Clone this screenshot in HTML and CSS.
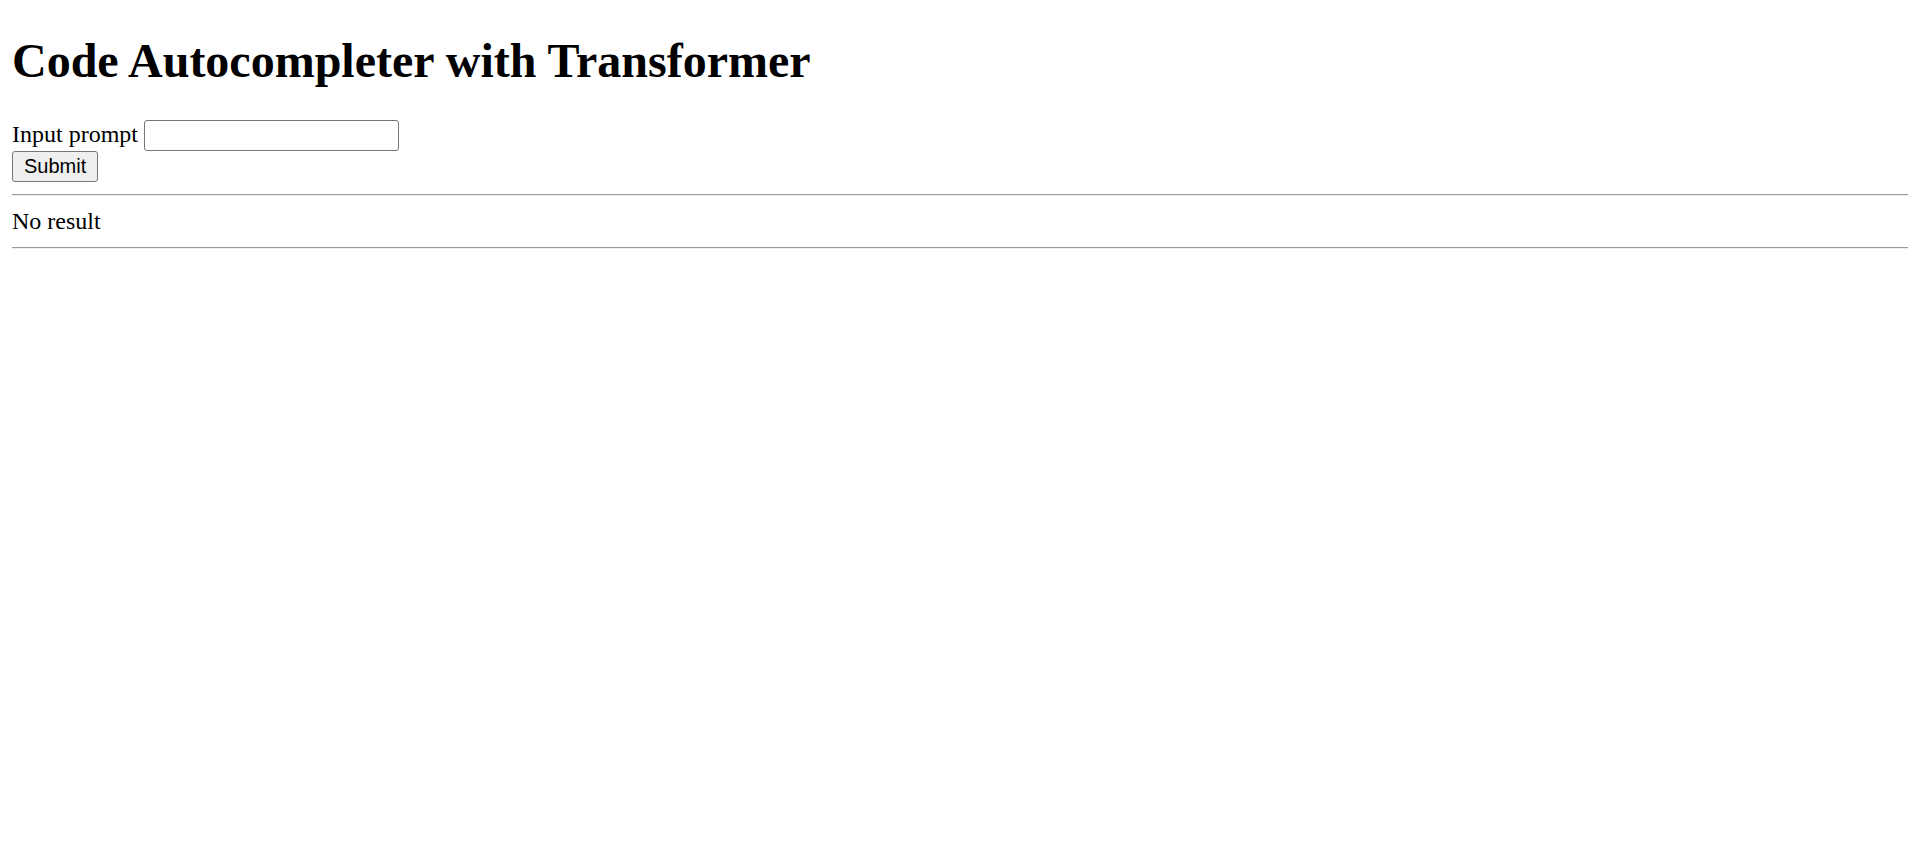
FILE: index.html
```html
<!DOCTYPE html>
<html>
<head>
<meta charset="utf-8">
<title>Code Autocompleter with Transformer</title>
<link rel="stylesheet" href="styles.css">
</head>
<body class="page">
<h1 class="title">Code Autocompleter with Transformer</h1>
<form class="prompt-form">
<label class="prompt-label" for="prompt">Input prompt</label> <input class="prompt-input" id="prompt" type="text"><br>
<button class="submit-btn" type="button">Submit</button>
</form>
<hr class="rule">
<div class="result">No result</div>
<hr class="rule">
</body>
</html>
```
FILE: styles.css
```css
html { background: #fff; }
.page {
  margin: 12px;
  font-family: "Liberation Serif", "Times New Roman", serif;
  font-size: 24px;
  color: #000;
}
.title {
  font-size: 48px;
  font-weight: bold;
  margin: 21px 0 32px;
}
.prompt-form { margin: 0; }
.prompt-input {
  box-sizing: border-box;
  width: 255px;
  height: 31px;
  border: 1px solid #767676;
  border-radius: 3px;
  padding: 1px 3px;
  font-family: "Liberation Sans", Arial, sans-serif;
  font-size: 20px;
  background: #fff;
}
.submit-btn {
  box-sizing: border-box;
  height: 31px;
  padding: 0 11px;
  border: 1px solid #767676;
  border-radius: 3px;
  background: #efefef;
  color: #000;
  font-family: "Liberation Sans", Arial, sans-serif;
  font-size: 20px;
}
.rule {
  margin: 12px 0;
  border: none;
  border-top: 1px solid #9a9a9a;
  border-bottom: 1px solid #eeeeee;
  height: 0;
}
.result { margin: 0; }
```
